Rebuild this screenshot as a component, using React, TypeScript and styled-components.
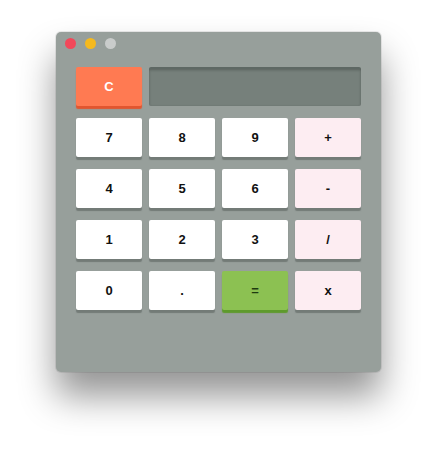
import React from 'react';
import styled, { createGlobalStyle } from 'styled-components';

const GlobalStyle = createGlobalStyle`
  html, body {
    margin: 0;
    padding: 0;
    background: #ffffff;
  }
  body {
    font-family: "Liberation Sans", Arial, sans-serif;
  }
`;

const Page = styled.div`
  padding: 32px 0 80px 56px;
`;

const Window = styled.div`
  width: 325px;
  height: 340px;
  box-sizing: border-box;
  background: #979f9b;
  border-radius: 5px;
  box-shadow: 0 24px 36px rgba(0, 0, 0, 0.42), 0 0 0 1px rgba(0, 0, 0, 0.08);
  padding: 6px 20px 0 20px;
`;

const TitleBar = styled.div`
  display: flex;
  gap: 9px;
  margin-left: -11px;
  height: 29px;
`;

const Dot = styled.span<{ $color: string }>`
  width: 11px;
  height: 11px;
  border-radius: 50%;
  background: ${(p) => p.$color};
`;

const Keypad = styled.div`
  display: grid;
  grid-template-columns: repeat(4, 66px);
  grid-auto-rows: 39px;
  column-gap: 7px;
  row-gap: 12px;
`;

type Variant = 'num' | 'op' | 'clear' | 'equal';

const faces: Record<Variant, { bg: string; edge: string; color: string }> = {
  num: { bg: '#ffffff', edge: '#737b77', color: '#111111' },
  op: { bg: '#fdedf2', edge: '#737b77', color: '#111111' },
  clear: { bg: '#ff7a52', edge: '#e2552f', color: '#ffffff' },
  equal: { bg: '#8cc152', edge: '#5e9a2c', color: '#1d3a10' },
};

const Key = styled.button<{ $variant: Variant }>`
  border: none;
  border-radius: 2px;
  padding: 0;
  margin: 0;
  font-family: "Liberation Sans", Arial, sans-serif;
  font-weight: bold;
  font-size: 13px;
  background: ${(p) => faces[p.$variant].bg};
  color: ${(p) => faces[p.$variant].color};
  box-shadow: 0 3px 1px ${(p) => faces[p.$variant].edge};
  cursor: pointer;
`;

const Display = styled.div`
  grid-column: span 3;
  box-sizing: border-box;
  background: #76807b;
  border-top: 2px solid #5e6864;
  border-radius: 2px;
  box-shadow: inset 0 1px 3px rgba(0, 0, 0, 0.25);
`;

const keys: { label: string; variant: Variant }[] = [
  { label: '7', variant: 'num' },
  { label: '8', variant: 'num' },
  { label: '9', variant: 'num' },
  { label: '+', variant: 'op' },
  { label: '4', variant: 'num' },
  { label: '5', variant: 'num' },
  { label: '6', variant: 'num' },
  { label: '-', variant: 'op' },
  { label: '1', variant: 'num' },
  { label: '2', variant: 'num' },
  { label: '3', variant: 'num' },
  { label: '/', variant: 'op' },
  { label: '0', variant: 'num' },
  { label: '.', variant: 'num' },
  { label: '=', variant: 'equal' },
  { label: 'x', variant: 'op' },
];

function App() {
  return (
    <>
      <GlobalStyle />
      <Page>
        <Window>
          <TitleBar>
            <Dot $color="#f2485a" />
            <Dot $color="#f5b91e" />
            <Dot $color="#c9cccb" />
          </TitleBar>
          <Keypad>
            <Key $variant="clear">C</Key>
            <Display />
            {keys.map((k) => (
              <Key key={k.label} $variant={k.variant}>
                {k.label}
              </Key>
            ))}
          </Keypad>
        </Window>
      </Page>
    </>
  );
}

export default App;
